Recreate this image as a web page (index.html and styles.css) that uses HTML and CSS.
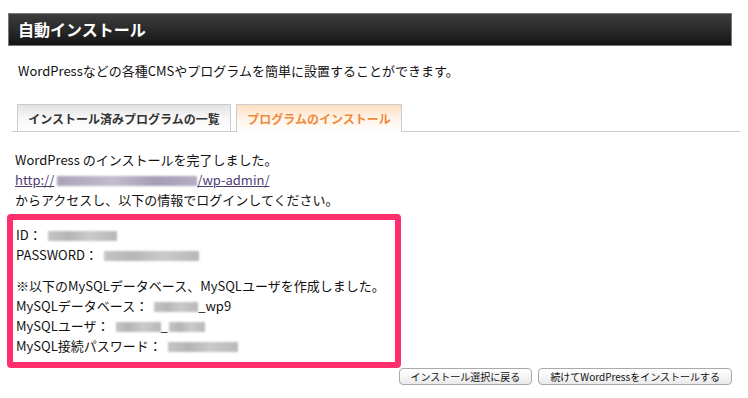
FILE: index.html
```html
<!DOCTYPE html>
<html lang="ja">
<head>
  <meta charset="UTF-8">
  <title>自動インストール</title>
  <link rel="stylesheet" href="styles.css">
</head>
<body>
  <div class="page">
    <h1 class="title-bar">自動インストール</h1>
    <p class="lead">WordPressなどの各種CMSやプログラムを簡単に設置することができます。</p>

    <ul class="tabs">
      <li class="tab">インストール済みプログラムの一覧</li>
      <li class="tab active">プログラムのインストール</li>
    </ul>

    <div class="result">
      <p class="done">
        WordPress のインストールを完了しました。<br>
        <a href="#" class="admin-link">http://<span class="blur blur-url"></span>/wp-admin/</a><br>
        からアクセスし、以下の情報でログインしてください。
      </p>

      <div class="info-box">
        <div class="row">ID：<span class="blur blur-id"></span></div>
        <div class="row">PASSWORD：<span class="blur blur-pass"></span></div>
        <div class="row note">※以下のMySQLデータベース、MySQLユーザを作成しました。</div>
        <div class="row">MySQLデータベース：<span class="blur blur-db"></span>_wp9</div>
        <div class="row">MySQLユーザ：<span class="blur blur-user1"></span>_<span class="blur blur-user2"></span></div>
        <div class="row">MySQL接続パスワード：<span class="blur blur-dbpass"></span></div>
      </div>

      <div class="actions">
        <button type="button">インストール選択に戻る</button>
        <button type="button">続けてWordPressをインストールする</button>
      </div>
    </div>
  </div>
</body>
</html>
```

FILE: styles.css
```css
body {
  margin: 0;
  font-family: "Noto Sans CJK JP", "DejaVu Sans", sans-serif;
  font-size: 13px;
  color: #111;
  background-color: #fff;
}

.page {
  width: 740px;
}

.title-bar {
  margin: 13px 0 0 8px;
  height: 31px;
  width: 713px;
  border: 1px solid #777;
  background: linear-gradient(to bottom, #3c3c3c 0%, #2a2a2a 50%, #141414 100%);
  color: #fff;
  font-size: 16px;
  font-weight: bold;
  line-height: 31px;
  padding-left: 9px;
}

.lead {
  margin: 15px 0 0 18px;
  line-height: 20px;
}

.tabs {
  list-style: none;
  margin: 23px 0 0 12px;
  padding: 0 0 0 5px;
  display: flex;
  gap: 5px;
  border-bottom: 1px solid #ccc;
  width: 723px;
  height: 27px;
}

.tab {
  height: 27px;
  box-sizing: border-box;
  width: 214px;
  border: 1px solid #ccc;
  border-bottom: none;
  background: linear-gradient(to bottom, #e2e2e2 0%, #f6f6f6 45%, #fff 100%);
  color: #333;
  font-size: 12px;
  font-weight: bold;
  line-height: 27px;
  text-align: center;
  white-space: nowrap;
}

.tab.active {
  background: linear-gradient(to bottom, #fddfc2 0%, #fff3e8 50%, #fff 100%);
  color: #f08a3a;
  width: 166px;
  height: 28px;
  margin-bottom: -1px;
}

.result {
  padding-left: 15px;
}

.done {
  margin: 18px 0 0 0;
  line-height: 20px;
}

.admin-link {
  color: #4f3b74;
}

.blur {
  display: inline-block;
  height: 10px;
  vertical-align: -1px;
  background: linear-gradient(to right, #c4c4c4, #b5b5b5 30%, #cacaca 60%, #b8b8b8);
  filter: blur(1px);
}

.blur-url {
  width: 140px;
  margin-left: 3px;
  background: linear-gradient(to right, #aaa3ba, #c2bccd 40%, #a59db6 70%, #b3acc3);
}

.info-box .blur {
  margin-left: 6px;
}

.blur-id { width: 69px; }
.blur-pass { width: 95px; }
.blur-db { width: 44px; }
.blur-user1 { width: 45px; }
.info-box .blur-user2 { width: 36px; margin-left: 1px; }
.blur-dbpass { width: 70px; }

.info-box {
  margin: 4px 0 0 -8px;
  width: 379px;
  border: 6px solid #ff2f6d;
  border-radius: 4px;
  padding: 5px 0 6px 3px;
}

.row {
  line-height: 20px;
}

.row.note {
  margin-top: 11px;
}

.actions {
  display: flex;
  justify-content: flex-end;
  gap: 6px;
  width: 717px;
}

button {
  font-family: "Noto Sans CJK JP", "DejaVu Sans", sans-serif;
  font-size: 10px;
  height: 17px;
  line-height: 15px;
  padding: 0 11px;
  border: 1px solid #aaa;
  border-radius: 4px;
  background: linear-gradient(to bottom, #fff 0%, #f3f3f3 60%, #e9e9e9 100%);
  color: #111;
}
```
